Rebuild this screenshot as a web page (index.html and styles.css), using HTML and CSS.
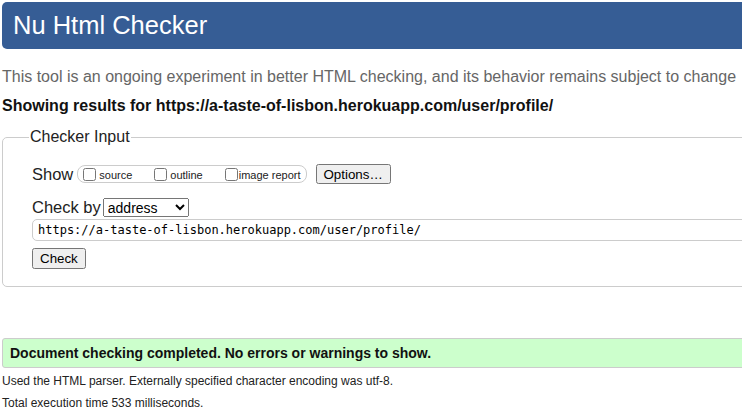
FILE: index.html
```html
<!DOCTYPE html>
<html>
<head>
<meta charset="utf-8">
<link rel="stylesheet" href="styles.css">
</head>
<body>
<div class="page">
  <h1 class="header">Nu Html Checker</h1>
  <p class="intro">This tool is an ongoing experiment in better HTML checking, and its behavior remains subject to change</p>
  <p class="showing">Showing results for https://a-taste-of-lisbon.herokuapp.com/user/profile/</p>
  <fieldset class="checker">
    <legend class="legend">Checker Input</legend>
    <div class="row show-row">
      <span class="label">Show</span>
      <span class="group">
        <label class="opt"><input type="checkbox">source</label>
        <label class="opt"><input type="checkbox">outline</label>
        <label class="opt last"><input type="checkbox">image report</label>
      </span>
      <button class="btn options">Options…</button>
    </div>
    <div class="row by-row">
      <span class="label">Check by</span>
      <select class="select"><option>address</option></select>
    </div>
    <input class="url" type="text" value="https://a-taste-of-lisbon.herokuapp.com/user/profile/">
    <button class="btn check">Check</button>
  </fieldset>
  <div class="success">Document checking completed. No errors or warnings to show.</div>
  <p class="meta">Used the HTML parser. Externally specified character encoding was utf-8.</p>
  <p class="meta">Total execution time 533 milliseconds.</p>
</div>
</body>
</html>
```
FILE: styles.css
```css
html, body {
  margin: 0;
  padding: 0;
  overflow: hidden;
  background: #fff;
}
body {
  font-family: "Liberation Sans", Arial, sans-serif;
  color: #000;
}
.page {
  width: 800px;
  padding: 2px;
}
.header {
  margin: 0;
  height: 47px;
  box-sizing: border-box;
  padding: 8px 11px 0;
  background: #365d95;
  color: #fff;
  font-size: 25.5px;
  font-weight: normal;
  line-height: 30px;
  border-radius: 5px;
}
.intro {
  margin: 18px 0 0;
  color: #666;
  font-size: 16px;
  line-height: 20px;
  white-space: nowrap;
}
.showing {
  margin: 9px 0 0;
  font-size: 16px;
  font-weight: bold;
  line-height: 20px;
  color: #111;
}
.checker {
  margin: 12px 0 0;
  padding: 18px 29px 17px;
  border: 1px solid #ccc;
  border-radius: 5px;
}
.legend {
  margin-left: -3px;
  padding: 0 1px;
  font-size: 16px;
  color: #222;
}
.row {
  display: flex;
  align-items: center;
}
.label {
  font-size: 16.5px;
  color: #222;
  margin-right: 4px;
}
.group {
  display: inline-flex;
  align-items: center;
  border: 1px solid #ccc;
  border-radius: 8px;
  height: 16px;
  padding: 0 5px 0 1px;
}
.opt {
  display: inline-flex;
  align-items: center;
  font-size: 11px;
  margin-right: 18px;
  color: #222;
  padding-top: 2px;
}
.opt input {
  margin: -2px 3px 0 4px;
  width: 13px;
  height: 13px;
}
.opt.last {
  margin-right: 0;
}
.opt.last input {
  margin-right: 1px;
}
.btn {
  font-family: "Liberation Sans", Arial, sans-serif;
  font-size: 13.33px;
}
.options {
  margin-left: 9px;
  height: 20px;
  padding: 0 6px;
}
.by-row {
  margin-top: 14px;
}
.by-row .label {
  margin-right: 2px;
}
.select {
  font-family: "Liberation Sans", Arial, sans-serif;
  font-size: 14px;
  height: 19px;
  width: 86px;
  padding: 0;
}
.url {
  display: block;
  margin-top: 2px;
  width: 760px;
  height: 22px;
  box-sizing: border-box;
  border: 1px solid #ccc;
  border-radius: 5px;
  padding: 0 5px;
  font-family: "DejaVu Sans Mono", "Liberation Mono", monospace;
  font-size: 12px;
}
.check {
  display: block;
  margin-top: 7px;
  height: 21px;
  padding: 0 6px;
}
.success {
  margin-top: 51px;
  height: 30px;
  box-sizing: border-box;
  padding: 0 7px;
  line-height: 28px;
  border: 1px solid #ccc;
  border-radius: 3px;
  background: #ccffcc;
  font-weight: bold;
  font-size: 14px;
  color: #111;
}
.meta {
  margin: 5px 0 0;
  font-size: 12px;
  line-height: 16px;
  color: #222;
}
.meta + .meta {
  margin-top: 6px;
}
```
